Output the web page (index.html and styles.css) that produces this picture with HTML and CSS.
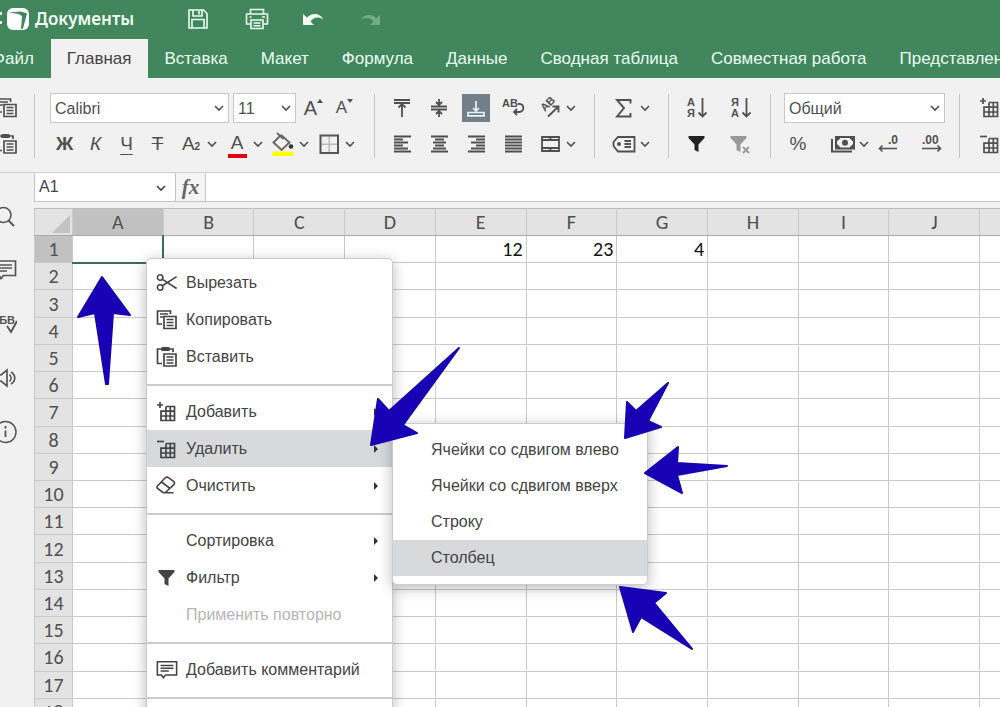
FILE: index.html
```html
<!DOCTYPE html>
<html lang="ru">
<head>
<meta charset="utf-8">
<title>Документы</title>
<link rel="stylesheet" href="styles.css">
</head>
<body>
<svg class="sprite" aria-hidden="true">
  <symbol id="chevron" viewBox="0 0 10 10"><path d="M1 3 5 7 9 3" fill="none" stroke="currentColor" stroke-width="1.600"/></symbol>
  <symbol id="copy" viewBox="0 0 22 22"><g fill="none" stroke="currentColor" stroke-width="1.700"><path d="M14.500 5V2H1.500v13H6M4 5h8M4 8h3"/><path d="M8 7.500h12v12H8z"/><path d="M10.500 10.500h7M10.500 13.500h7M10.500 16.500h7" stroke-width="1.400"/></g></symbol>
  <symbol id="paste" viewBox="0 0 22 22"><g fill="none" stroke="currentColor" stroke-width="1.700"><path d="M5 3H1.500v14.500H6M14 3h3v3"/><path d="M8 8h12v12H8z"/><path d="M10.500 11h7M10.500 14h7M10.500 17h7" stroke-width="1.400"/></g><rect x="5" y="1" width="9" height="4" rx="1.500" fill="currentColor"/></symbol>
  <symbol id="grid-add" viewBox="0 0 22 22"><g fill="none" stroke="currentColor" stroke-width="1.700"><path d="M4 1v6M1 4h6"/><path d="M10 5.500h8.500v14H5v-9.300h13.500M10 5.500v14M14.300 5.500v14M5 15h13.500"/></g></symbol>
  <symbol id="grid-del" viewBox="0 0 22 22"><g fill="none" stroke="currentColor" stroke-width="1.700"><path d="M1 3.500h7"/><path d="M10 5.500h8.500v14H5v-9.300h13.500M10 5.500v14M14.300 5.500v14M5 15h13.500"/></g></symbol>
  <symbol id="filter" viewBox="0 0 22 22"><path d="M2.500 3h16v2L12.500 11.500V19l-4-2v-5.500L2.500 5z" fill="currentColor"/></symbol>
  <symbol id="comment" viewBox="0 0 24 22"><path d="M1.500 2h21v14.500h-12L8 19.500 6 16.500H1.500zM5 6h14M5 9h14M5 12h9" fill="none" stroke="currentColor" stroke-width="1.700"/></symbol>
</svg>

<header class="header">
  <div class="titlebar">
    <span class="back"></span>
    <a class="brand" href="#">
      <svg width="24" height="24" viewBox="0 0 24 24"><rect x="1" y="1" width="22" height="22" rx="6" fill="#fff"/><path d="M2.500 5.500 15 4.500l6 2L17 21.500l-2 .8L16 9 12.500 7z" fill="#40865c"/></svg>
      <span>Документы</span>
    </a>
    <div class="quick">
      <button aria-label="Сохранить"><svg width="22" height="22" viewBox="0 0 22 22"><path d="M2 2h14.500L20 5.500V20H2zM6 2v6h9V2M12 3v3.500M5 20v-8.500h12V20" fill="none" stroke="#e9fff0" stroke-width="1.600"/></svg></button>
      <button aria-label="Печать"><svg width="24" height="22" viewBox="0 0 24 22"><path d="M5.500 6V1.500h13V6M5 16H1.500V6h21v10H19M6 12h12v8.500H6zM8.500 15h7M8.500 17.800h7M4.500 9h2M17 9h3" fill="none" stroke="#e9fff0" stroke-width="1.600"/></svg></button>
      <button aria-label="Отменить"><svg width="22" height="16" viewBox="0 0 22 16"><path d="M0 3v11h11L7.500 10.500C11 6 15 5.500 20.500 8.500 17 2.500 10 1 4 6.500z" fill="#f2fff6"/></svg></button>
      <button aria-label="Повторить"><svg width="22" height="16" viewBox="0 0 22 16"><path d="M20 4v10H10l3.500-3.500C10 6.500 6 6 .5 8.500 4 3.500 11 2 16.500 7z" fill="#74aa89"/></svg></button>
    </div>
  </div>
  <nav class="tabs">
    <button>Файл</button><button class="active">Главная</button><button>Вставка</button><button>Макет</button><button>Формула</button><button>Данные</button><button>Сводная таблица</button><button>Совместная работа</button><button>Представление</button>
  </nav>
</header>

<div class="toolbar">
  <div class="group clip">
    <div class="row"><button class="tool" aria-label="Копировать"><svg width="22" height="22"><use href="#copy"/></svg></button></div>
    <div class="row"><button class="tool" aria-label="Вставить"><svg width="22" height="22"><use href="#paste"/></svg></button></div>
  </div>
  <div class="group font">
    <div class="row fields">
      <label class="field wide"><select aria-label="Шрифт"><option>Calibri</option></select><svg width="10" height="10"><use href="#chevron"/></svg></label>
      <label class="field size"><select aria-label="Размер"><option>11</option></select><svg width="10" height="10"><use href="#chevron"/></svg></label>
      <button class="tool grow" aria-label="Увеличить"><span class="big">А</span><svg width="6" height="4" viewBox="0 0 6 4"><path d="M0 4 3 0l3 4z" fill="currentColor"/></svg></button>
      <button class="tool grow" aria-label="Уменьшить"><span class="small">А</span><svg width="6" height="4" viewBox="0 0 6 4"><path d="M0 0h6L3 4z" fill="currentColor"/></svg></button>
    </div>
    <div class="row letters">
      <button class="tool letter bold">Ж</button><button class="tool letter italic">К</button><button class="tool letter under">Ч</button><button class="tool letter strike">Т</button>
      <div class="splits">
        <button class="split"><span class="glyph letter">А<sub>2</sub></span><svg width="10" height="10"><use href="#chevron"/></svg></button>
        <button class="split"><span class="glyph letter color">А</span><svg width="10" height="10"><use href="#chevron"/></svg></button>
        <button class="split" aria-label="Заливка"><svg class="glyph" width="28" height="28" viewBox="0 0 28 28"><path d="M12 5 20.500 12.500 12.500 20 4.500 12.500 12 5M8 3l6.500 6" fill="none" stroke="#666" stroke-width="1.900"/><circle cx="22" cy="16.500" r="2.300" fill="#333"/><path d="M3.500 21.500h21V26h-21z" fill="#ff0"/></svg><svg width="10" height="10"><use href="#chevron"/></svg></button>
        <button class="split" aria-label="Границы"><svg class="glyph" width="28" height="28" viewBox="0 0 28 28"><path d="M14.300 6v16M6 14.300h16" stroke="#bbb" stroke-width="1.500"/><path d="M5.500 5.500h17.500v17.500H5.500z" fill="none" stroke="#555" stroke-width="2"/></svg><svg width="10" height="10"><use href="#chevron"/></svg></button>
      </div>
    </div>
  </div>
  <div class="group align">
    <div class="row">
      <button class="tool" aria-label="По верхнему краю"><svg width="28" height="28" viewBox="0 0 28 28"><path d="M6 6h16M6 9h16M14 10v13M10.500 13.500 14 10l3.500 3.500" fill="none" stroke="currentColor" stroke-width="1.800"/></svg></button>
      <button class="tool" aria-label="По середине"><svg width="28" height="28" viewBox="0 0 28 28"><path d="M6 12.500h16M6 15.500h16M14 5v6M14 23v-6M11 8l3 3 3-3M11 20l3-3 3 3" fill="none" stroke="currentColor" stroke-width="1.800"/></svg></button>
      <button class="tool pressed" aria-label="По нижнему краю"><svg width="28" height="28" viewBox="0 0 28 28"><path d="M6 18.500h16v3.300H6zM14 7v10M11 14l3 3 3-3" fill="none" stroke="currentColor" stroke-width="1.700"/></svg></button>
      <button class="tool" aria-label="Перенос"><svg width="28" height="28" viewBox="0 0 28 28"><text x="3" y="13" class="ico">АВ</text><path d="M19 10c7-1 7 8 1 8h-5M18 15l-3 3 3 3" fill="none" stroke="currentColor" stroke-width="1.800"/></svg></button>
      <button class="split" aria-label="Ориентация"><svg class="glyph" width="28" height="28" viewBox="0 0 28 28"><text x="7" y="18" class="ico" transform="rotate(-45 8 16)">АВ</text><path d="M12 22.500 22 13M16.500 12.500H22.500V18.500" fill="none" stroke="currentColor" stroke-width="1.800"/></svg><svg width="10" height="10"><use href="#chevron"/></svg></button>
    </div>
    <div class="row">
      <button class="tool" aria-label="По левому краю"><svg width="28" height="28" viewBox="0 0 28 28"><path d="M6 6.500h17M6 9.500h9M6 12.500h14M6 15.500h9M6 18.500h14M6 21.500h17" stroke="currentColor" stroke-width="1.800"/></svg></button>
      <button class="tool" aria-label="По центру"><svg width="28" height="28" viewBox="0 0 28 28"><path d="M6 6.500h17M10 9.500h9M8 12.500h13M10 15.500h9M8 18.500h13M6 21.500h17" stroke="currentColor" stroke-width="1.800"/></svg></button>
      <button class="tool" aria-label="По правому краю"><svg width="28" height="28" viewBox="0 0 28 28"><path d="M6 6.500h17M14 9.500h9M9 12.500h14M14 15.500h9M9 18.500h14M6 21.500h17" stroke="currentColor" stroke-width="1.800"/></svg></button>
      <button class="tool" aria-label="По ширине"><svg width="28" height="28" viewBox="0 0 28 28"><path d="M6 6.500h17M6 9.500h17M6 12.500h17M6 15.500h17M6 18.500h17M6 21.500h17" stroke="currentColor" stroke-width="1.800"/></svg></button>
      <button class="split" aria-label="Объединить"><svg class="glyph" width="28" height="28" viewBox="0 0 28 28"><path d="M6 7h17v14H6zM6 10h17M6 18h17M14.500 7v3M14.500 18v3" fill="none" stroke="currentColor" stroke-width="1.800"/></svg><svg width="10" height="10"><use href="#chevron"/></svg></button>
    </div>
  </div>
  <div class="group sum">
    <div class="row"><button class="split" aria-label="Сумма"><svg class="glyph" width="28" height="28" viewBox="0 0 28 28"><path d="M20.500 9.500V6H7l7 8-7 8.500h13.500V19" fill="none" stroke="currentColor" stroke-width="1.900"/></svg><svg width="10" height="10"><use href="#chevron"/></svg></button></div>
    <div class="row"><button class="split" aria-label="Имена"><svg class="glyph" width="28" height="28" viewBox="0 0 28 28"><path d="M8 7h16.500v14.500H8L3.500 16v-4zM14.500 11h6.500M14.500 14h6.500M14.500 17h6.500" fill="none" stroke="currentColor" stroke-width="1.800"/><circle cx="9" cy="14" r="2" fill="currentColor"/></svg><svg width="10" height="10"><use href="#chevron"/></svg></button></div>
  </div>
  <div class="group sort">
    <div class="row">
      <button class="tool" aria-label="По возрастанию"><svg width="28" height="28" viewBox="0 0 28 28"><text x="4" y="12" class="ico">А</text><text x="4" y="23" class="ico">Я</text><path d="M19.500 4v18.500M15.500 18.500l4 4 4-4" fill="none" stroke="currentColor" stroke-width="1.800"/></svg></button>
      <button class="tool" aria-label="По убыванию"><svg width="28" height="28" viewBox="0 0 28 28"><text x="5" y="12" class="ico">Я</text><text x="5" y="23" class="ico">А</text><path d="M20.500 4v18.500M16.500 18.500l4 4 4-4" fill="none" stroke="currentColor" stroke-width="1.800"/></svg></button>
    </div>
    <div class="row">
      <button class="tool dark" aria-label="Фильтр"><svg width="22" height="22"><use href="#filter"/></svg></button>
      <button class="tool off" aria-label="Снять фильтр"><svg width="28" height="28" viewBox="0 0 28 28"><path d="M4.500 6h16v2L14.500 14.500V22l-4-2v-5.500L4.500 8z" fill="currentColor"/><path d="m17 17 6 6M23 17l-6 6" stroke="currentColor" stroke-width="1.800"/></svg></button>
    </div>
  </div>
  <div class="group number">
    <div class="row"><label class="field"><select aria-label="Формат"><option>Общий</option></select><svg width="10" height="10"><use href="#chevron"/></svg></label></div>
    <div class="row formats">
      <button class="tool percent">%</button>
      <button class="split" aria-label="Валюта"><svg class="glyph" width="28" height="28" viewBox="0 0 28 28"><path d="M7 7h18v11.500H7zM3 9v12.500h20" fill="none" stroke="currentColor" stroke-width="2"/><circle cx="16" cy="12.700" r="3" fill="currentColor"/><path d="M8 8h3l-3 3zM24 8h-3l3 3zM8 17.500h3l-3-3zM24 17.500h-3l3-3z" stroke="currentColor" fill="currentColor"/></svg><svg width="10" height="10"><use href="#chevron"/></svg></button>
      <button class="tool" aria-label="Уменьшить разрядность"><svg width="28" height="28" viewBox="0 0 28 28"><text x="13" y="14" class="num">.0</text><path d="M22 18.500H4.500M7.500 15.500l-3 3 3 3" fill="none" stroke="currentColor" stroke-width="1.600"/></svg></button>
      <button class="tool" aria-label="Увеличить разрядность"><svg width="28" height="28" viewBox="0 0 28 28"><text x="5" y="14" class="num">.00</text><path d="M5 18.500h18.500M20.500 15.500l3 3-3 3" fill="none" stroke="currentColor" stroke-width="1.600"/></svg></button>
    </div>
  </div>
  <div class="group cells">
    <div class="row"><button class="tool" aria-label="Добавить"><svg width="22" height="22"><use href="#grid-add"/></svg></button></div>
    <div class="row"><button class="tool" aria-label="Удалить"><svg width="22" height="22"><use href="#grid-del"/></svg></button></div>
  </div>
</div>

<div class="workspace">
  <aside class="sidebar">
    <button aria-label="Поиск"><svg width="24" height="24" viewBox="0 0 24 24"><circle cx="10.500" cy="11" r="7.500" fill="none" stroke="currentColor" stroke-width="1.600"/><path d="m15.500 16.500 5.500 5.500" stroke="currentColor" stroke-width="2"/></svg></button>
    <button aria-label="Комментарии"><svg width="24" height="22"><use href="#comment"/></svg></button>
    <button aria-label="Орфография"><svg width="24" height="24" viewBox="0 0 24 24"><text x="22" y="12" text-anchor="end" class="ico">БВ</text><path d="m14 14 4 6 6-11" fill="none" stroke="currentColor" stroke-width="1.900"/></svg></button>
    <button aria-label="Звук"><svg width="24" height="24" viewBox="0 0 24 24"><path d="M3 9h5l6-5v16l-6-5H3zM16.500 8.500c2 2 2 5 0 7M18 6c5 3 5 9 0 12" fill="none" stroke="currentColor" stroke-width="1.700"/></svg></button>
    <button aria-label="Сведения"><svg width="24" height="24" viewBox="0 0 24 24"><circle cx="12.500" cy="12" r="10.500" fill="none" stroke="currentColor" stroke-width="1.500"/><path d="M12.500 6v2.500M12.500 10.500V17" stroke="currentColor" stroke-width="1.800"/></svg></button>
  </aside>

  <main class="main">
    <div class="formula">
      <label class="namebox"><input aria-label="Имя ячейки" value="A1"><svg width="10" height="10"><use href="#chevron"/></svg></label>
      <button class="fx">fx</button>
      <input class="expr" aria-label="Формула">
    </div>

    <div class="sheet">
      <table class="cells-table">
        <thead><tr><th class="corner"><svg width="18" height="18" viewBox="0 0 18 18"><path d="M18 0v18H0z" fill="#c3c3c3"/></svg></th><th class="selected">A</th><th>B</th><th>C</th><th>D</th><th>E</th><th>F</th><th>G</th><th>H</th><th>I</th><th>J</th><th></th></tr></thead>
        <tbody>
          <tr><th class="selected">1</th><td class="current"></td><td></td><td></td><td></td><td>12</td><td>23</td><td>4</td><td></td><td></td><td></td><td></td></tr>
          <tr><th>2</th><td></td><td></td><td></td><td></td><td></td><td></td><td></td><td></td><td></td><td></td><td></td></tr>
          <tr><th>3</th><td></td><td></td><td></td><td></td><td></td><td></td><td></td><td></td><td></td><td></td><td></td></tr>
          <tr><th>4</th><td></td><td></td><td></td><td></td><td></td><td></td><td></td><td></td><td></td><td></td><td></td></tr>
          <tr><th>5</th><td></td><td></td><td></td><td></td><td></td><td></td><td></td><td></td><td></td><td></td><td></td></tr>
          <tr><th>6</th><td></td><td></td><td></td><td></td><td></td><td></td><td></td><td></td><td></td><td></td><td></td></tr>
          <tr><th>7</th><td></td><td></td><td></td><td></td><td></td><td></td><td></td><td></td><td></td><td></td><td></td></tr>
          <tr><th>8</th><td></td><td></td><td></td><td></td><td></td><td></td><td></td><td></td><td></td><td></td><td></td></tr>
          <tr><th>9</th><td></td><td></td><td></td><td></td><td></td><td></td><td></td><td></td><td></td><td></td><td></td></tr>
          <tr><th>10</th><td></td><td></td><td></td><td></td><td></td><td></td><td></td><td></td><td></td><td></td><td></td></tr>
          <tr><th>11</th><td></td><td></td><td></td><td></td><td></td><td></td><td></td><td></td><td></td><td></td><td></td></tr>
          <tr><th>12</th><td></td><td></td><td></td><td></td><td></td><td></td><td></td><td></td><td></td><td></td><td></td></tr>
          <tr><th>13</th><td></td><td></td><td></td><td></td><td></td><td></td><td></td><td></td><td></td><td></td><td></td></tr>
          <tr><th>14</th><td></td><td></td><td></td><td></td><td></td><td></td><td></td><td></td><td></td><td></td><td></td></tr>
          <tr><th>15</th><td></td><td></td><td></td><td></td><td></td><td></td><td></td><td></td><td></td><td></td><td></td></tr>
          <tr><th>16</th><td></td><td></td><td></td><td></td><td></td><td></td><td></td><td></td><td></td><td></td><td></td></tr>
          <tr><th>17</th><td></td><td></td><td></td><td></td><td></td><td></td><td></td><td></td><td></td><td></td><td></td></tr>
          <tr><th>18</th><td></td><td></td><td></td><td></td><td></td><td></td><td></td><td></td><td></td><td></td><td></td></tr>
        </tbody>
      </table>

      <div class="menu context">
        <button class="item"><svg width="24" height="22" viewBox="0 0 24 22"><g fill="none" stroke="currentColor" stroke-width="1.700"><circle cx="4.500" cy="5" r="3"/><circle cx="4.500" cy="16" r="3"/><path d="M7 7 22.500 17M7 14 22.500 4"/></g></svg><span>Вырезать</span></button>
        <button class="item"><svg width="22" height="22"><use href="#copy"/></svg><span>Копировать</span></button>
        <button class="item"><svg width="22" height="22"><use href="#paste"/></svg><span>Вставить</span></button>
        <hr>
        <button class="item more"><svg width="22" height="22"><use href="#grid-add"/></svg><span>Добавить</span></button>
        <div class="branch">
          <button class="item more hover"><svg width="22" height="22"><use href="#grid-del"/></svg><span>Удалить</span></button>
          <div class="menu submenu">
            <button class="item">Ячейки со сдвигом влево</button>
            <button class="item">Ячейки со сдвигом вверх</button>
            <button class="item">Строку</button>
            <button class="item hover">Столбец</button>
          </div>
        </div>
        <button class="item more"><svg width="22" height="22" viewBox="0 0 22 22"><path d="M7 17.500 1.500 13.500c-.8-.8-.8-1.500 0-2.500l7.500-8c1.200-1.200 2.200-1.200 3.500-.4l5 3.800c1.200 1 1.300 2 .4 3.200L10.500 16.500c-.8.9-2 1.500-3.500 1zM5.500 7l8 6M7 17.800h10.500" fill="none" stroke="currentColor" stroke-width="1.600"/></svg><span>Очистить</span></button>
        <hr>
        <button class="item more"><i class="blank"></i><span>Сортировка</span></button>
        <button class="item more"><svg width="22" height="22"><use href="#filter"/></svg><span>Фильтр</span></button>
        <button class="item" disabled><i class="blank"></i><span>Применить повторно</span></button>
        <hr>
        <button class="item"><svg width="24" height="22"><use href="#comment"/></svg><span>Добавить комментарий</span></button>
        <hr>
        <button class="item"><i class="blank"></i></button>
      </div>
    </div>
  </main>
</div>

<svg class="arrows" width="760" height="680" viewBox="0 0 760 680" aria-hidden="true">
  <path d="M102 277 130 315 113 313 108 384H106L95 313 78 317Z"/>
  <path d="M371 445 378 399 389 411 459 348 403 425 417 433Z"/>
  <path d="M625 438 627 402 636 411 668 383 648 421 661 427Z"/>
  <path d="M645 473 678 447 677 463 727 466 677 475 682 493Z"/>
  <path d="M620 587 666 593 654 603 692 649 641 617 633 632Z"/>
</svg>
</body>
</html>
```
FILE: styles.css
```css
* { box-sizing: border-box; }
html, body { height: 100%; }
body {
  margin: 0;
  overflow: hidden;
  position: relative;
  display: flex;
  flex-direction: column;
  background: #f1f1f1;
  color: #444;
  font-family: "Liberation Sans", Arial, sans-serif;
  font-size: 16px;
}
button, input, select { font: inherit; color: inherit; margin: 0; }
button { border: 0; padding: 0; background: none; cursor: pointer; }
svg { display: block; flex: none; }
.sprite { position: absolute; width: 0; height: 0; }

/* Header */
.header { flex: none; background: #41865c; color: #e9fff0; }
.titlebar { display: flex; align-items: center; height: 39px; padding: 0 0 2px 6px; position: relative; }
.back { position: absolute; left: 0; top: 12px; width: 2px; height: 12px; border: solid #e9fff0; border-width: 3px 0; }
.brand {
  display: flex; align-items: center; gap: 5px; width: 180px;
  color: #f2fff6; text-decoration: none;
  font: 600 17px "Noto Sans", "Open Sans", sans-serif;
}
.quick { display: flex; }
.quick button { width: 57px; height: 37px; display: grid; place-items: center; }
.quick button:first-child { width: 24px; margin: 0 18px 0 0; }
.tabs { display: flex; gap: 1px; height: 39px; margin-left: -24px; overflow: hidden; }
.tabs button { flex: none; padding: 0 16px; height: 39px; font-size: 17px; white-space: nowrap; }
.tabs .active { background: #f1f1f1; color: #444; }

/* Toolbar */
.toolbar { flex: none; display: flex; height: 95px; padding-top: 16px; overflow: hidden; border-bottom: 1px solid #d0d0d0; color: #505050; }
.group { flex: none; height: 64px; display: flex; flex-direction: column; gap: 8px; border-right: 1px solid #c6c6c6; }
.row { display: flex; align-items: center; height: 28px; }
.tool, .glyph { width: 28px; height: 28px; flex: none; display: grid; place-items: center; }
.split { display: flex; align-items: center; gap: 2px; }
.pressed { background: #737f88; color: #e8f2fa; }
.field { position: relative; display: flex; height: 30px; }
.field select { appearance: none; width: 100%; padding: 0 4px; border: 1px solid #c8c8c8; background: #fff; border-radius: 0; }
.field svg { position: absolute; right: 5px; top: 10px; pointer-events: none; }
.clip { width: 35px; }
.clip .row { width: 18px; justify-content: flex-end; overflow: hidden; }
.clip .tool { width: 22px; }
.font { width: 340px; padding-left: 14px; }
.fields { padding-left: 1px; }
.wide { width: 179px; margin-right: 4px; }
.size { width: 63px; margin-right: 2px; }
.grow { width: 31px; display: flex; justify-content: center; align-items: flex-start; }
.big { font-size: 20px; line-height: 28px; }
.small { font-size: 17px; line-height: 28px; }
.grow svg { margin-top: 5px; }
.letter { font-size: 19px; }
.letters .tool { width: 31px; }
.bold { font-weight: bold; }
.italic { font-style: italic; }
.under { text-decoration: underline; text-underline-offset: 4px; }
.strike { text-decoration: line-through; }
.letter sub { font-size: 10px; font-weight: bold; vertical-align: baseline; }
.splits { display: flex; gap: 6px; padding-left: 4px; }
.glyph.letter { display: block; line-height: 28px; text-align: center; }
.glyph.color { background: linear-gradient(#e00010, #e00010) 50% 100% / 19px 4px no-repeat; line-height: 25px; }
.align { width: 220px; padding-left: 13px; }
.align .row { gap: 9px; }
.sum { width: 74px; padding-left: 15px; }
.sort { width: 102px; padding-left: 14px; }
.sort .row { gap: 15px; }
.dark { color: #222; }
.off { color: #999; }
.number { width: 189px; padding: 0 14px 0 13px; }
.number .field { width: 100%; }
.formats { gap: 12px; }
.percent { font-size: 19px; }
.formats .split { padding-left: 5px; }
.formats .split + .tool { margin-left: -6px; }
.formats .tool:last-child { margin-left: 2px; }
.cells { border: 0; padding-left: 19px; }
.cells .tool { width: 22px; }
.ico { font: bold 11px "Liberation Sans", Arial, sans-serif; fill: currentColor; }
.num { font: bold 12px "Liberation Sans", Arial, sans-serif; fill: currentColor; }

/* Workspace */
.workspace { flex: 1; display: flex; min-height: 0; overflow: hidden; }
.sidebar { flex: none; width: 34px; padding: 16px 17px 0 0; display: flex; flex-direction: column; align-items: flex-end; color: #555; }
.sidebar button { height: 54px; flex: none; }
.main { flex: 1; min-width: 0; display: flex; flex-direction: column; }
.formula { flex: none; display: flex; height: 29px; border-bottom: 1px solid #c4c4c4; background: #fff; }
.namebox { position: relative; width: 142px; border: solid #c4c4c4; border-width: 0 1px; }
.namebox input { width: 100%; height: 28px; border: 0; padding: 0 4px; background: none; }
.namebox svg { position: absolute; right: 9px; top: 10px; }
.fx { width: 30px; background: #f5f5f5; border-right: 1px solid #c4c4c4; font: italic bold 21px "Liberation Serif", serif; color: #666; }
.expr { flex: 1; min-width: 0; border: 0; background: none; }

/* Grid */
.sheet { flex: 1; position: relative; min-height: 0; padding-top: 6px; }
.cells-table { width: 1037px; height: 518px; table-layout: fixed; border-collapse: collapse; background: #fff; font: 20px Carlito, Lato, sans-serif; }
.cells-table th, .cells-table td { padding: 0; height: 27px; line-height: 22px; border: 1px solid #c9c9c9; }
.cells-table th { background: #e3e3e3; font-weight: normal; color: #505050; }
.cells-table thead th { border-top-color: #bbb; border-bottom-color: #aaa; }
.cells-table .corner { width: 38px; }
.corner svg { margin: 3px 2px 0 auto; }
.cells-table .selected { background: #c1c1c1; }
.cells-table td { text-align: right; padding-right: 3px; color: #111; }
.cells-table .current { border-right: 2px solid #3d6e55; border-bottom: 2px solid #3d6e55; }

/* Menus */
.menu { position: absolute; background: #fff; border: 1px solid #ccc; border-radius: 5px; box-shadow: 0 3px 14px rgba(0, 0, 0, .28); }
.context { left: 112px; top: 56px; width: 247px; padding-top: 5px; }
.menu hr { margin: 9px 0 7px; border: 0; height: 2px; background: #ccc; }
.item { display: flex; align-items: center; gap: 8px; width: 100%; height: 37px; padding-left: 9px; text-align: left; white-space: nowrap; position: relative; }
.item svg, .blank { width: 22px; }
.item span { color: #444; }
.item:disabled span { color: #b5b5b5; }
.hover { background: #d8d9db; }
.more::after { content: ""; position: absolute; right: 14px; border: solid transparent; border-width: 4px 0 4px 4px; border-left-color: #333; }
.branch { position: relative; }
.submenu { left: 100%; top: -7px; width: 256px; padding: 8px 0; z-index: 1; }
.submenu .item { height: 36px; padding-left: 38px; }

.arrows { position: absolute; left: 0; top: 0; pointer-events: none; fill: #1800b4; stroke: #1800b4; stroke-width: 2; stroke-linejoin: round; z-index: 3; }
```
